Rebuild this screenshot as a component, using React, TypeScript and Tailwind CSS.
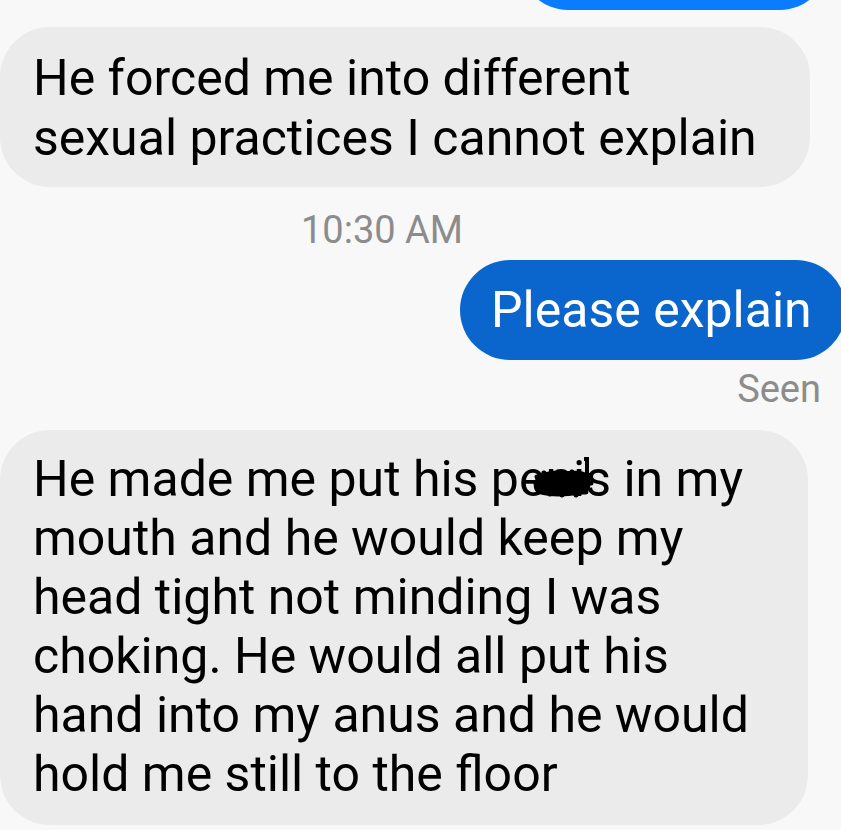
import React from "react";

const font = { fontFamily: "Roboto, 'Noto Sans', sans-serif" };

function Censor() {
  return (
    <span className="relative inline-block">
      ni
      <svg
        className="absolute left-[-13px] top-[6px]"
        width="62"
        height="44"
        viewBox="0 0 62 44"
      >
        <path
          d="M3 24 C6 16 18 14 32 15 C44 15 52 13 57 20 C61 28 58 38 46 39 C32 41 16 41 7 38 C1 35 1 29 3 24 Z"
          fill="#000"
        />
        <path
          d="M5 21 L56 19 M4 28 L59 27 M7 35 L54 36 M12 17 L18 38 M26 16 L30 39 M40 16 L44 39"
          stroke="#000"
          strokeWidth="5"
          strokeLinecap="round"
        />
        <path d="M52 3 L55 3 L55 20" stroke="#000" strokeWidth="4" fill="none" />
      </svg>
    </span>
  );
}

export default function App() {
  return (
    <div
      className="w-[841px] h-[830px] bg-[#f8f8f8] overflow-hidden flex flex-col"
      style={font}
    >
      <div className="self-end mr-[13px] w-[308px] h-[100px] mt-[-90px] rounded-[48px] bg-[#0a7cff] shrink-0" />
      <div className="mt-[17px] w-[810px] h-[160px] rounded-[50px] bg-[#ebebeb] px-[33px] pt-[21px] text-[50px] leading-[60px] text-black shrink-0">
        He forced me into different
        <br />
        sexual practices I cannot explain
      </div>
      <div className="ml-[301px] mt-[21px] text-[38px] leading-[44px] text-[#8c8c8c] shrink-0">
        10:30 AM
      </div>
      <div className="self-end mr-[-5px] mt-[8px] w-[386px] h-[100px] rounded-[50px] bg-[#0a66cc] pl-[31px] pt-[20px] text-[50px] leading-[60px] text-white shrink-0">
        Please explain
      </div>
      <div className="self-end mr-[20px] mt-[7px] text-[38px] leading-[44px] text-[#8c8c8c] shrink-0">
        Seen
      </div>
      <div className="mt-[19px] w-[808px] h-[395px] rounded-[50px] bg-[#ebebeb] px-[33px] pt-[20px] text-[50px] leading-[59px] text-black shrink-0">
        He made me put his pe<Censor />s in my
        <br />
        mouth and he would keep my
        <br />
        head tight not minding I was
        <br />
        choking. He would all put his
        <br />
        hand into my anus and he would
        <br />
        hold me still to the floor
      </div>
    </div>
  );
}
